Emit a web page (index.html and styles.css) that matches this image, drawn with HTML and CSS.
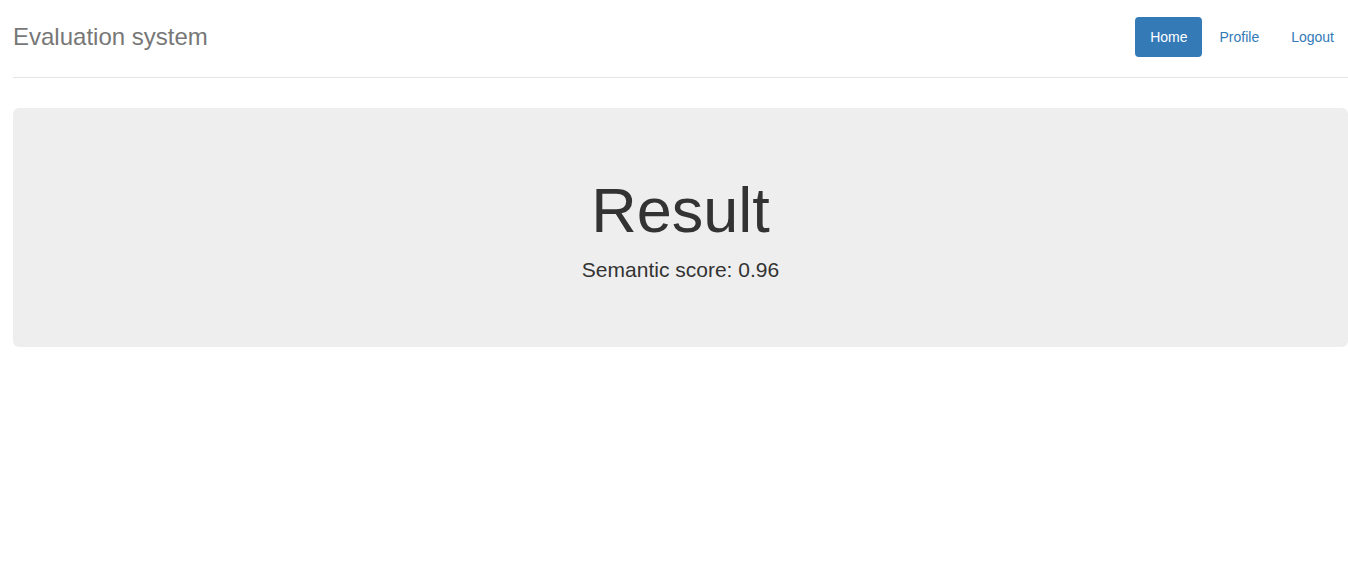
FILE: index.html
```html
<!DOCTYPE html>
<html lang="en">
<head>
<meta charset="utf-8">
<title>Evaluation system</title>
<link rel="stylesheet" href="styles.css">
</head>
<body>
<div class="container">
  <header class="header">
    <h3 class="brand">Evaluation system</h3>
    <nav>
      <ul class="nav-pills">
        <li class="active"><a href="#">Home</a></li>
        <li><a href="#">Profile</a></li>
        <li><a href="#">Logout</a></li>
      </ul>
    </nav>
  </header>
  <section class="jumbotron">
    <h1>Result</h1>
    <p>Semantic score: 0.96</p>
  </section>
</div>
</body>
</html>
```
FILE: styles.css
```css
* { box-sizing: border-box; }
html, body {
  margin: 0;
  padding: 0;
  background: #fff;
}
body {
  font-family: "Liberation Sans", Arial, Helvetica, sans-serif;
  font-size: 14px;
  line-height: 1.42857143;
  color: #333;
}
.container {
  padding: 17px 0 0 13px;
}
.header {
  display: flex;
  justify-content: space-between;
  align-items: flex-start;
  padding-bottom: 20px;
  border-bottom: 1px solid #e5e5e5;
  margin-bottom: 30px;
}
.brand {
  margin: 0;
  font-size: 24px;
  font-weight: 500;
  line-height: 40px;
  color: #777;
}
.nav-pills {
  display: flex;
  list-style: none;
  margin: 0 -1px 0 0;
  padding: 0;
}
.nav-pills li { margin-left: 2px; }
.nav-pills a {
  display: block;
  padding: 10px 15px;
  line-height: 20px;
  color: #337ab7;
  text-decoration: none;
  border-radius: 4px;
}
.nav-pills .active a {
  background: #337ab7;
  color: #fff;
}
.jumbotron {
  background: #eee;
  border-radius: 6px;
  padding: 48px 60px;
  text-align: center;
  margin-bottom: 30px;
}
.jumbotron h1 {
  margin: 20px 0 10px;
  font-size: 63px;
  font-weight: 500;
  line-height: 69px;
  color: #333;
}
.jumbotron p {
  margin: 0 0 14px;
  font-size: 21px;
  line-height: 30px;
}
```
